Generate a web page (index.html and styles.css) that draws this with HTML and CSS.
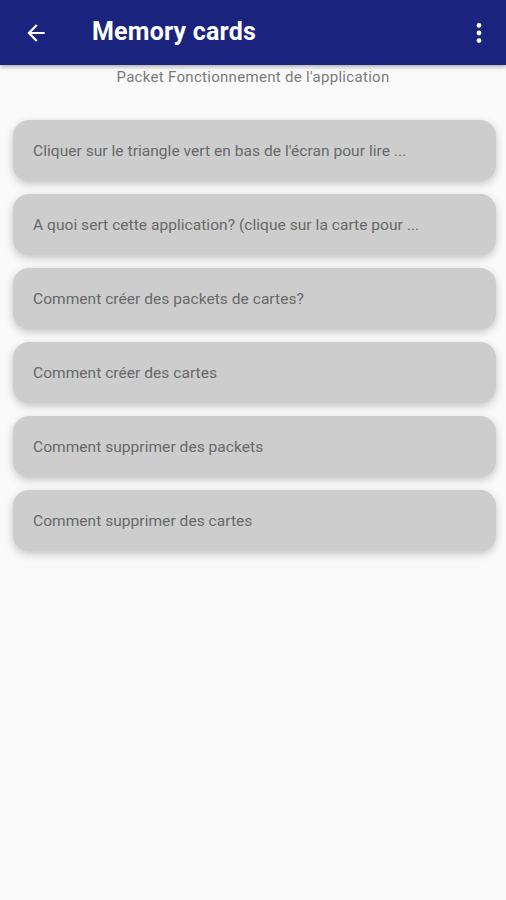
FILE: index.html
```html
<!DOCTYPE html>
<html lang="fr">
<head>
<meta charset="utf-8">
<title>Memory cards</title>
<link rel="stylesheet" href="styles.css">
</head>
<body>
<header class="appbar">
  <svg class="icon back" viewBox="0 0 24 24" width="26" height="26"><path d="M20 11H7.83l5.59-5.59L12 4l-8 8 8 8 1.41-1.41L7.83 13H20v-2z" fill="#fff"/></svg>
  <h1 class="title">Memory cards</h1>
  <svg class="icon more" viewBox="0 0 24 24" width="26" height="26"><circle cx="12" cy="5" r="2.2" fill="#fff"/><circle cx="12" cy="12" r="2.2" fill="#fff"/><circle cx="12" cy="19" r="2.2" fill="#fff"/></svg>
</header>
<p class="subtitle">Packet Fonctionnement de l'application</p>
<main class="list">
  <div class="card">Cliquer sur le triangle vert en bas de l'écran pour lire ...</div>
  <div class="card">A quoi sert cette application? (clique sur la carte pour ...</div>
  <div class="card">Comment créer des packets de cartes?</div>
  <div class="card">Comment créer des cartes</div>
  <div class="card">Comment supprimer des packets</div>
  <div class="card">Comment supprimer des cartes</div>
</main>
</body>
</html>
```
FILE: styles.css
```css
* { box-sizing: border-box; }
html, body { margin: 0; padding: 0; }
body {
  background: #fafafa;
  font-family: Roboto, "Noto Sans", sans-serif;
  width: 506px;
  height: 900px;
  overflow: hidden;
}
.appbar {
  height: 65px;
  background: #1a237e;
  display: flex;
  align-items: center;
  padding: 0 14px 0 23px;
  box-shadow: 0 2px 4px rgba(0,0,0,0.3);
  position: relative;
  z-index: 1;
}
.icon { display: block; flex: none; }
.back { margin-right: 43px; }
.title {
  flex: 1;
  margin: 0 0 2px;
  color: #fff;
  font-size: 25px;
  font-weight: 700;
  letter-spacing: 0.2px;
}
.subtitle {
  margin: 0;
  padding-top: 2px;
  text-align: center;
  font-size: 15px;
  color: #7a7a7a;
  line-height: 20px;
  letter-spacing: 0.3px;
}
.list {
  display: flex;
  flex-direction: column;
  gap: 13px;
  padding: 33px 10px 0 13px;
}
.card {
  height: 61px;
  border-radius: 16px;
  background: #cdcdcd;
  box-shadow: 0 3px 8px rgba(0,0,0,0.22);
  display: flex;
  align-items: center;
  padding-left: 20px;
  font-size: 15.5px;
  color: #686868;
  letter-spacing: 0.05px;
}
```
